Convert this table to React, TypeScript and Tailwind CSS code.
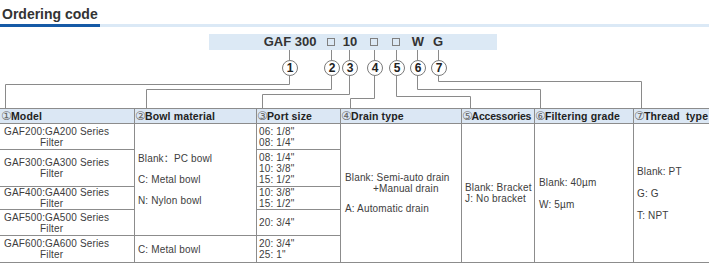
import React from "react";

const FONT = { fontFamily: '"Liberation Sans", Arial, "Noto Sans CJK SC", sans-serif' };

function Circ({ n, cls }: { n: string; cls: string }) {
  return (
    <div
      className={`absolute top-[32px] w-[16px] h-[16px] rounded-full border border-[#7a7a7a] bg-white flex items-center justify-center text-[12px] font-bold text-[#222] leading-none ${cls}`}
    >
      {n}
    </div>
  );
}

function Box({ cls }: { cls: string }) {
  return <span className={`absolute top-[4px] w-[8px] h-[8px] border border-[#808080] -translate-x-1/2 ${cls}`} />;
}

function Num({ c }: { c: string }) {
  return (
    <span
      className="text-[12px] leading-none font-normal text-[#666] -ml-[1px] -mr-[1px]"
      style={{ fontFamily: '"DejaVu Sans", "Noto Sans CJK SC", sans-serif' }}
    >
      {c}
    </span>
  );
}

const cell = "border-r border-b border-[#8c8c8c]";
const head = "bg-[#dbe7f4] flex items-center text-[10.5px] font-bold text-[#222] whitespace-nowrap overflow-hidden";

export default function App() {
  return (
    <div className="w-[709px] h-[270px] bg-white text-[#3d3d3d] overflow-hidden" style={FONT}>
      {/* Title */}
      <div className="pt-[6px] pl-[2px] text-[14px] leading-[16px] font-bold text-[#333]">Ordering code</div>
      <div className="mt-[2px] mb-[1px] flex">
        <div className="w-[100px] h-[3px] bg-[#165aa6]" />
        <div className="flex-1 h-[3px] bg-[#dbe9f6]" />
      </div>

      {/* Diagram */}
      <div className="relative h-[80px]">
        <div className="absolute left-[209px] top-[6px] w-[288px] h-[16px] bg-[#dce9f5] text-[13px] leading-[16px] font-bold text-[#333]">
          <span className="absolute left-[81px] -translate-x-1/2 whitespace-nowrap">GAF 300</span>
          <Box cls="left-[122px]" />
          <span className="absolute left-[141px] -translate-x-1/2">10</span>
          <Box cls="left-[165px]" />
          <Box cls="left-[187px]" />
          <span className="absolute left-[209px] -translate-x-1/2">W</span>
          <span className="absolute left-[229px] -translate-x-1/2">G</span>
        </div>
        <svg className="absolute left-0 top-0" width="709" height="80" fill="none" stroke="#8a8a8a" strokeWidth="1">
          <path d="M289.5 22V32M289.5 48V56.5H5.5V80" />
          <path d="M331.5 22V32M331.5 48V61.5H146.5V80" />
          <path d="M349.5 22V32M349.5 48V66.5H262.5V80" />
          <path d="M374.5 22V32M374.5 48V70.5H350.5V80" />
          <path d="M396.5 22V32M396.5 48V68.5H470.5V80" />
          <path d="M417.5 22V32M417.5 48V61.5H540.5V80" />
          <path d="M438.5 22V32M438.5 48V53.5H641.5V80" />
        </svg>
        <Circ n="1" cls="left-[282px]" />
        <Circ n="2" cls="left-[324px]" />
        <Circ n="3" cls="left-[342px]" />
        <Circ n="4" cls="left-[367px]" />
        <Circ n="5" cls="left-[389px]" />
        <Circ n="6" cls="left-[410px]" />
        <Circ n="7" cls="left-[431px]" />
      </div>

      {/* Table */}
      <div className="grid grid-cols-[135px_122px_84px_121px_73px_99px_75px] grid-rows-[15px_26px_37px_23px_26px_27px] border-t border-[#8c8c8c] text-[10px] leading-[11px] tracking-[0.15px]">
        {/* header */}
        <div className={`${cell} ${head} pl-[2px]`}>
          <Num c="①" />Model
        </div>
        <div className={`${cell} ${head} pl-[1px]`}>
          <Num c="②" />Bowl material
        </div>
        <div className={`${cell} ${head} pl-[1px]`}>
          <Num c="③" />Port size
        </div>
        <div className={`${cell} ${head} pl-[1px]`}>
          <Num c="④" />Drain type
        </div>
        <div className={`${cell} ${head} pl-[1px] tracking-[-0.2px]`}>
          <Num c="⑤" />Accessories
        </div>
        <div className={`${cell} ${head} pl-[1px]`}>
          <Num c="⑥" />Filtering grade
        </div>
        <div className={`border-b border-[#8c8c8c] ${head} pl-[1px]`}>
          <Num c="⑦" />Thread&nbsp; type
        </div>

        {/* row 1 */}
        <div className={`${cell} pl-[4px] flex flex-col justify-center`}>
          <div>GAF200:GA200 Series</div>
          <div className="pl-[36px]">Filter</div>
        </div>
        <div className={`${cell} row-span-4 pl-[3px] flex flex-col justify-center gap-[10px]`}>
          <div>Blank：PC bowl</div>
          <div>C: Metal bowl</div>
          <div>N: Nylon bowl</div>
        </div>
        <div className={`${cell} pl-[2px] flex flex-col justify-center`}>
          <div>06: 1/8"</div>
          <div>08: 1/4"</div>
        </div>
        <div className={`${cell} row-span-5 pl-[4px] flex flex-col justify-center`}>
          <div>Blank: Semi-auto drain</div>
          <div className="pl-[28px]">+Manual drain</div>
          <div className="mt-[9px]">A: Automatic drain</div>
        </div>
        <div className={`${cell} row-span-5 pl-[3px] flex flex-col justify-center`}>
          <div>Blank: Bracket</div>
          <div>J: No bracket</div>
        </div>
        <div className={`${cell} row-span-5 pl-[4px] flex flex-col justify-center gap-[11px]`}>
          <div>Blank: 40µm</div>
          <div>W: 5µm</div>
        </div>
        <div className="border-b border-[#8c8c8c] row-span-5 pl-[3px] flex flex-col justify-center gap-[11px]">
          <div>Blank: PT</div>
          <div>G: G</div>
          <div>T: NPT</div>
        </div>

        {/* row 2 */}
        <div className={`${cell} pl-[4px] flex flex-col justify-center`}>
          <div>GAF300:GA300 Series</div>
          <div className="pl-[36px]">Filter</div>
        </div>
        <div className={`${cell} pl-[2px] flex flex-col justify-center`}>
          <div>08: 1/4"</div>
          <div>10: 3/8"</div>
          <div>15: 1/2"</div>
        </div>

        {/* row 3 */}
        <div className={`${cell} pl-[4px] flex flex-col justify-center`}>
          <div>GAF400:GA400 Series</div>
          <div className="pl-[36px]">Filter</div>
        </div>
        <div className={`${cell} pl-[2px] flex flex-col justify-center`}>
          <div>10: 3/8"</div>
          <div>15: 1/2"</div>
        </div>

        {/* row 4 */}
        <div className={`${cell} pl-[4px] flex flex-col justify-center`}>
          <div>GAF500:GA500 Series</div>
          <div className="pl-[36px]">Filter</div>
        </div>
        <div className={`${cell} pl-[2px] flex flex-col justify-center`}>
          <div>20: 3/4"</div>
        </div>

        {/* row 5 */}
        <div className={`${cell} pl-[4px] flex flex-col justify-center`}>
          <div>GAF600:GA600 Series</div>
          <div className="pl-[36px]">Filter</div>
        </div>
        <div className={`${cell} pl-[3px] flex flex-col justify-center`}>
          <div>C: Metal bowl</div>
        </div>
        <div className={`${cell} pl-[2px] flex flex-col justify-center`}>
          <div>20: 3/4"</div>
          <div>25: 1"</div>
        </div>
      </div>
    </div>
  );
}
